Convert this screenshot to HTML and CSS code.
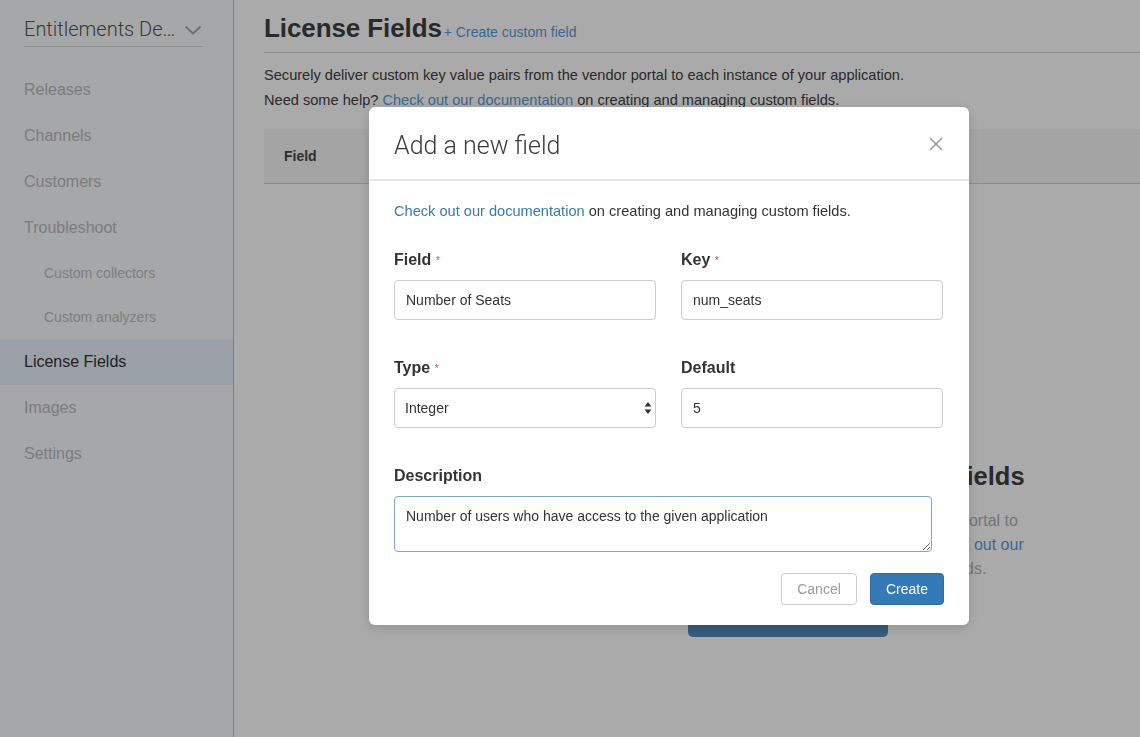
FILE: index.html
```html
<!DOCTYPE html>
<html lang="en">
<head>
<meta charset="utf-8">
<title>License Fields</title>
<link rel="stylesheet" href="styles.css">
</head>
<body>
<div class="app">
  <aside class="sidebar">
    <div class="brand">
      <span class="brand-name">Entitlements De…</span>
      <svg class="chevron" width="18" height="10" viewBox="0 0 18 10"><path d="M1.5 1.5 L9 8.5 L16.5 1.5" fill="none" stroke="#a6a6a6" stroke-width="2"/></svg>
    </div>
    <nav class="nav">
      <a class="nav-item">Releases</a>
      <a class="nav-item">Channels</a>
      <a class="nav-item">Customers</a>
      <a class="nav-item">Troubleshoot</a>
      <a class="nav-sub">Custom collectors</a>
      <a class="nav-sub">Custom analyzers</a>
      <a class="nav-item active">License Fields</a>
      <a class="nav-item">Images</a>
      <a class="nav-item">Settings</a>
    </nav>
  </aside>
  <main class="main">
    <header class="page-header">
      <h1 class="page-title">License Fields</h1>
      <a class="create-link">+ Create custom field</a>
    </header>
    <p class="intro">Securely deliver custom key value pairs from the vendor portal to each instance of your application.</p>
    <p class="intro">Need some help? <a class="link">Check out our documentation</a> on creating and managing custom fields.</p>
    <div class="table-head"><span>Field</span></div>
    <section class="empty">
      <h2 class="empty-title">You haven't created any License Fields</h2>
      <p class="empty-text">Securely deliver custom key value pairs from the vendor portal to each instance of your application. Need some help? <a class="link">Check out our documentation</a> on creating and managing custom fields.</p>
      <button class="empty-btn">Create a custom field</button>
    </section>
  </main>
</div>

<div class="overlay">
  <div class="modal">
    <div class="modal-header">
      <h3 class="modal-title">Add a new field</h3>
      <svg class="close" width="14" height="14" viewBox="0 0 14 14"><path d="M1 1 L13 13 M13 1 L1 13" stroke="#9a9a9a" stroke-width="1.6" fill="none"/></svg>
    </div>
    <div class="modal-body">
      <p class="modal-note"><a class="mlink">Check out our documentation</a> on creating and managing custom fields.</p>
      <div class="form-grid">
        <div class="group">
          <label class="label">Field <span class="req">*</span></label>
          <input class="input" type="text" value="Number of Seats">
        </div>
        <div class="group">
          <label class="label">Key <span class="req">*</span></label>
          <input class="input" type="text" value="num_seats">
        </div>
        <div class="group">
          <label class="label">Type <span class="req">*</span></label>
          <div class="select-wrap">
            <select class="input select"><option>Integer</option></select>
            <svg class="select-arrows" width="8" height="14" viewBox="0 0 8 14"><path d="M4 1 L7.5 5.5 L0.5 5.5 Z M4 13 L7.5 8.5 L0.5 8.5 Z" fill="#333"/></svg>
          </div>
        </div>
        <div class="group">
          <label class="label">Default</label>
          <input class="input" type="text" value="5">
        </div>
        <div class="group wide">
          <label class="label">Description</label>
          <textarea class="textarea" autofocus>Number of users who have access to the given application</textarea>
        </div>
      </div>
      <div class="actions">
        <button class="btn btn-cancel">Cancel</button>
        <button class="btn btn-create">Create</button>
      </div>
    </div>
  </div>
</div>
</body>
</html>
```
FILE: styles.css
```css
* { box-sizing: border-box; }
html, body { margin: 0; padding: 0; }
body {
  font-family: "Liberation Sans", Arial, Helvetica, sans-serif;
  color: #333;
  background: #fff;
  width: 1140px;
  height: 737px;
  overflow: hidden;
}
.app { display: flex; height: 737px; }

.sidebar {
  width: 234px;
  flex: none;
  background: #fafbfd;
  border-right: 1px solid #bfbfbf;
}
.brand {
  margin: 0 30px 0 24px;
  height: 47px;
  padding-top: 12px;
  display: flex;
  align-items: center;
  justify-content: space-between;
  border-bottom: 1px solid #d5d5d5;
}
.brand-name {
  font-family: Roboto, "Liberation Sans", sans-serif;
  font-weight: 300;
  font-size: 20px;
  color: #555;
}
.chevron { margin-right: 1px; margin-top: 2px; }
.nav { display: flex; flex-direction: column; margin-top: 20px; }
.nav-item {
  height: 46px;
  line-height: 46px;
  padding-left: 24px;
  font-size: 16px;
  color: #b9babd;
}
.nav-sub {
  height: 44px;
  line-height: 44px;
  padding-left: 44px;
  font-size: 14px;
  color: #bdbec1;
}
.nav-item.active { background: #e7f0fc; color: #333; }

.main { flex: 1; padding-left: 30px; min-width: 0; }
.page-header {
  display: flex;
  align-items: baseline;
  gap: 2px;
  padding-top: 13px;
  padding-bottom: 9px;
  border-bottom: 1px solid #d8d8d8;
}
.page-title { margin: 0; font-size: 26px; line-height: 30px; font-weight: bold; color: #404040; letter-spacing: -0.1px; }
.create-link { font-size: 14px; color: #5b9bd5; }
.intro { margin: 0; font-size: 14.6px; line-height: 25px; color: #404040; }
.page-header + .intro { margin-top: 10px; }
.link { color: #5b9bd5; }
.table-head {
  margin-top: 16px;
  height: 55px;
  background: #f6f6f6;
  border-bottom: 1px solid #d0d0d0;
  display: flex;
  align-items: center;
  padding-left: 20px;
  font-size: 14px;
  font-weight: bold;
  color: #474747;
}

.empty {
  width: 500px;
  margin: 277px 0 0 274px;
  text-align: center;
}
.empty-title { margin: 0 -40px; font-size: 25.5px; line-height: 30px; font-weight: bold; color: #404040; }
.empty-text { margin: 18px 0 0; font-size: 16px; line-height: 24px; color: #b0b0b0; padding: 0 10px; }
.empty-btn {
  margin-top: 19px;
  width: 200px;
  height: 37px;
  border: 0;
  border-radius: 5px;
  background: #528abe;
  color: #fff;
  font-family: inherit;
  font-size: 16px;
}

.overlay {
  position: fixed;
  inset: 0;
  background: rgba(0, 0, 0, 0.333);
  padding: 107px 0 0 369px;
}
.modal {
  width: 600px;
  background: #fff;
  border-radius: 6px;
  box-shadow: 0 3px 12px rgba(0, 0, 0, 0.15);
}
.modal-header {
  height: 74px;
  padding: 4px 25px 0;
  border-bottom: 2px solid #e5e5e5;
  display: flex;
  align-items: center;
  justify-content: space-between;
}
.modal-title {
  margin: 0;
  font-family: Roboto, "Liberation Sans", sans-serif;
  font-weight: 300;
  font-size: 25px;
  color: #3a3a3a;
}
.close { margin-right: 1px; margin-top: -3px; }
.modal-body { padding: 20px 25px 20px; }
.modal-note { margin: 0; font-size: 14.6px; line-height: 20px; color: #333; }
.mlink { color: #337ab7; }
.form-grid {
  display: grid;
  grid-template-columns: 262px 262px;
  column-gap: 25px;
  row-gap: 38px;
  margin-top: 29px;
}
.group { display: flex; flex-direction: column; gap: 10px; }
.group.wide { grid-column: 1 / 3; }
.label { font-size: 16px; line-height: 20px; font-weight: bold; color: #333; }
.req { color: #d9534f; font-size: 11px; font-weight: normal; vertical-align: top; margin-left: 0; }
.input {
  height: 40px;
  width: 100%;
  border: 1px solid #cccccc;
  border-radius: 4px;
  padding: 0 11px;
  font-family: "Liberation Sans", Arial, sans-serif;
  font-size: 14px;
  color: #333;
  background: #fff;
}
.select-wrap { position: relative; }
.select { appearance: none; -webkit-appearance: none; padding-left: 10px; }
.select-arrows { position: absolute; right: 4px; top: 13px; }
.textarea {
  width: 538px;
  height: 56px;
  border: 1px solid #7ea6cf;
  border-radius: 4px;
  padding: 9px 11px;
  font-family: "Liberation Sans", Arial, sans-serif;
  font-size: 14px;
  line-height: 20px;
  color: #333;
  outline: none;
  resize: vertical;
}
.actions {
  display: flex;
  justify-content: flex-end;
  gap: 13px;
  margin-top: 21px;
}
.btn {
  height: 32px;
  border-radius: 4px;
  font-family: "Liberation Sans", Arial, sans-serif;
  font-size: 14px;
  padding: 0;
}
.btn-cancel { width: 76px; background: #fff; border: 1px solid #cccccc; color: #9b9b9b; }
.btn-create { width: 74px; background: #337ab7; border: 1px solid #2e6da4; color: #fff; }
```
